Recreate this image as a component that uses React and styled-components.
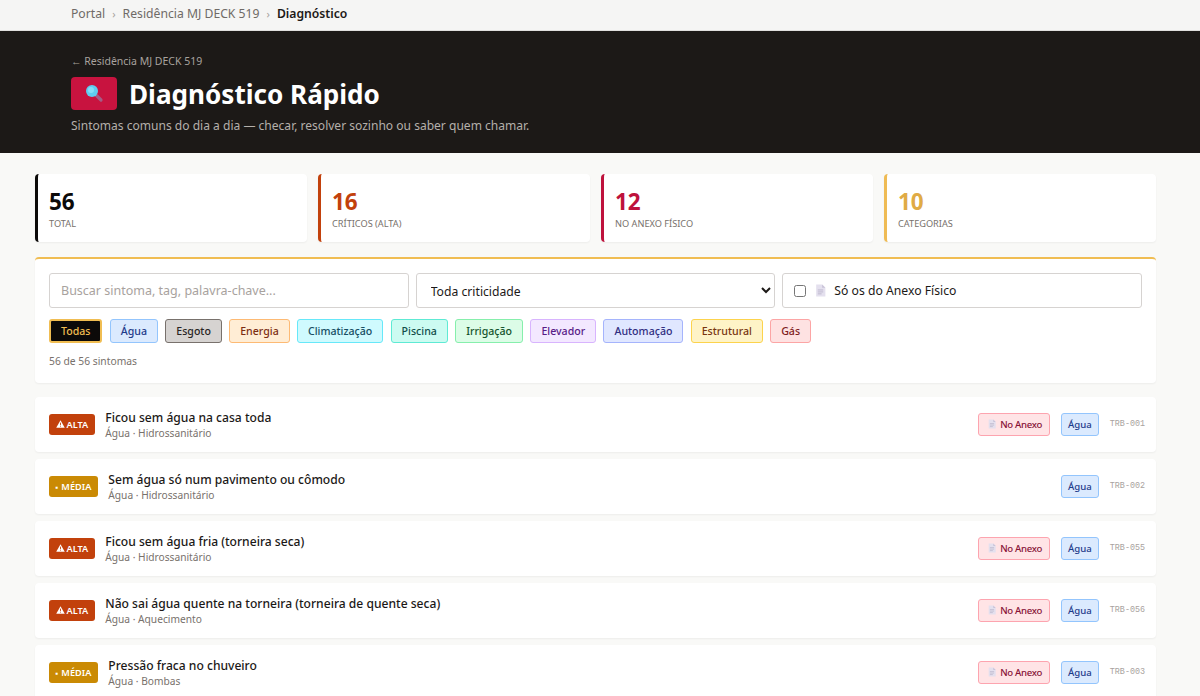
import React from "react";
import styled, { createGlobalStyle } from "styled-components";

const stats = [
  { value: "56", label: "TOTAL", color: "#0c0a09", text: "#0c0a09" },
  { value: "16", label: "CRÍTICOS (ALTA)", color: "#c2410c", text: "#c2410c" },
  { value: "12", label: "NO ANEXO FÍSICO", color: "#be123c", text: "#be123c" },
  { value: "10", label: "CATEGORIAS", color: "#efbb54", text: "#e0ab45" },
];

const pills = [
  { name: "Todas", bg: "#0c0a09", border: "#f0bd52", color: "#f0bd52", width: 2 },
  { name: "Água", bg: "#dbeafe", border: "#93c5fd", color: "#1e3a8a" },
  { name: "Esgoto", bg: "#d6d3d1", border: "#78716c", color: "#292524" },
  { name: "Energia", bg: "#ffedd5", border: "#fdba74", color: "#7c2d12" },
  { name: "Climatização", bg: "#cffafe", border: "#67e8f9", color: "#164e63" },
  { name: "Piscina", bg: "#ccfbf1", border: "#5eead4", color: "#134e4a" },
  { name: "Irrigação", bg: "#dcfce7", border: "#86efac", color: "#14532d" },
  { name: "Elevador", bg: "#f3e8ff", border: "#d8b4fe", color: "#581c87" },
  { name: "Automação", bg: "#e0e7ff", border: "#a5b4fc", color: "#312e81" },
  { name: "Estrutural", bg: "#fef3c7", border: "#fcd34d", color: "#78350f" },
  { name: "Gás", bg: "#fee2e2", border: "#fca5a5", color: "#7f1d1d" },
];

const rows = [
  { level: "alta", title: "Ficou sem água na casa toda", sub: "Água · Hidrossanitário", annex: true, code: "TRB-001" },
  { level: "media", title: "Sem água só num pavimento ou cômodo", sub: "Água · Hidrossanitário", annex: false, code: "TRB-002" },
  { level: "alta", title: "Ficou sem água fria (torneira seca)", sub: "Água · Hidrossanitário", annex: true, code: "TRB-055" },
  { level: "alta", title: "Não sai água quente na torneira (torneira de quente seca)", sub: "Água · Aquecimento", annex: true, code: "TRB-056" },
  { level: "media", title: "Pressão fraca no chuveiro", sub: "Água · Bombas", annex: true, code: "TRB-003" },
];

const DocIcon = ({ size = 12 }) => (
  <svg width={size} height={size} viewBox="0 0 12 12" aria-hidden="true">
    <path d="M2 0.5h5.5L10.5 3.5V11.5H2z" fill="#e4e0ee" />
    <path d="M7.5 0.5L10.5 3.5H7.5z" fill="#c9c3d8" />
    <path d="M3.5 5.5h5M3.5 7.3h5M3.5 9.1h3.5" stroke="#b9b3ca" strokeWidth="0.8" />
  </svg>
);

const WarnIcon = () => (
  <svg width="9" height="8" viewBox="0 0 10 9" aria-hidden="true">
    <path d="M5 0.4L9.8 8.6H0.2z" fill="#fff" />
    <path d="M5 3v2.6M5 6.4v1" stroke="#c2410c" strokeWidth="1" />
  </svg>
);

const LensIcon = () => (
  <svg width="20" height="20" viewBox="0 0 20 20" aria-hidden="true">
    <path d="M11.5 11.5L17 17" stroke="#a45d86" strokeWidth="3.2" strokeLinecap="round" />
    <circle cx="8" cy="8" r="6" fill="#5fcdf0" />
    <circle cx="7" cy="7" r="3" fill="#84def7" />
  </svg>
);

export default function App() {
  return (
    <Page>
      <GlobalStyle />
      <Breadcrumb>
        <span>Portal</span>
        <Sep>›</Sep>
        <span>Residência MJ DECK 519</span>
        <Sep>›</Sep>
        <Current>Diagnóstico</Current>
      </Breadcrumb>
      <Hero>
        <BackLink>← Residência MJ DECK 519</BackLink>
        <TitleRow>
          <IconBox><LensIcon /></IconBox>
          <Title>Diagnóstico Rápido</Title>
        </TitleRow>
        <Subtitle>Sintomas comuns do dia a dia — checar, resolver sozinho ou saber quem chamar.</Subtitle>
      </Hero>
      <Main>
        <StatGrid>
          {stats.map((s) => (
            <StatCard key={s.label} $color={s.color}>
              <StatValue $color={s.text}>{s.value}</StatValue>
              <StatLabel>{s.label}</StatLabel>
            </StatCard>
          ))}
        </StatGrid>
        <FilterPanel>
          <FilterGrid>
            <SearchInput placeholder="Buscar sintoma, tag, palavra-chave..." />
            <Select defaultValue="all">
              <option value="all">Toda criticidade</option>
            </Select>
            <CheckLabel>
              <Check type="checkbox" />
              <DocIcon size={13} />
              <span>Só os do Anexo Físico</span>
            </CheckLabel>
          </FilterGrid>
          <PillRow>
            {pills.map((p) => (
              <Pill key={p.name} $bg={p.bg} $border={p.border} $color={p.color} $width={p.width}>
                {p.name}
              </Pill>
            ))}
          </PillRow>
          <Count>56 de 56 sintomas</Count>
        </FilterPanel>
        <List>
          {rows.map((r) => (
            <Row key={r.code}>
              <Level $level={r.level}>
                {r.level === "alta" ? <WarnIcon /> : <Dot>▪</Dot>}
                {r.level === "alta" ? "ALTA" : "MÉDIA"}
              </Level>
              <RowText>
                <RowTitle>{r.title}</RowTitle>
                <RowSub>{r.sub}</RowSub>
              </RowText>
              <RowTags>
                {r.annex && (
                  <AnnexTag>
                    <DocIcon size={10} />
                    No Anexo
                  </AnnexTag>
                )}
                <WaterTag>Água</WaterTag>
                <Code>{r.code}</Code>
              </RowTags>
            </Row>
          ))}
        </List>
      </Main>
    </Page>
  );
}

const GlobalStyle = createGlobalStyle`
  html, body {
    margin: 0;
    height: 696px;
    overflow: hidden;
    background: #f9f9f7;
  }
  * { box-sizing: border-box; }
`;

const Page = styled.div`
  font-family: "Noto Sans", "Open Sans", sans-serif;
  color: #1c1917;
`;

const Breadcrumb = styled.nav`
  height: 31px;
  padding: 0 71px 4px;
  display: flex;
  align-items: center;
  gap: 7px;
  background: #f5f5f4;
  border-bottom: 1px solid #e0dfdd;
  font-size: 12.2px;
  color: #6f6a66;
`;

const Sep = styled.span`
  color: #a8a29e;
  font-size: 11px;
`;

const Current = styled.span`
  color: #1c1917;
  font-weight: 600;
`;

const Hero = styled.header`
  height: 122px;
  padding: 22px 71px 0;
  background: #1c1917;
  color: #fff;
`;

const BackLink = styled.div`
  font-size: 10.5px;
  line-height: 16px;
  color: #a8a29e;
`;

const TitleRow = styled.div`
  display: flex;
  align-items: center;
  gap: 12px;
  margin-top: 7px;
`;

const IconBox = styled.div`
  width: 46px;
  height: 33px;
  margin-bottom: 2px;
  display: flex;
  align-items: center;
  justify-content: center;
  background: #c8133f;
  border-radius: 4px;
`;

const Title = styled.h1`
  margin: 0;
  font-size: 26.1px;
  line-height: 36px;
  font-weight: 700;
`;

const Subtitle = styled.p`
  margin: 5px 0 0;
  font-size: 12.06px;
  line-height: 18px;
  color: #b5b0ab;
`;

const Main = styled.main`
  padding: 21px 44px 0 35px;
`;

const StatGrid = styled.section`
  display: grid;
  grid-template-columns: repeat(4, 1fr);
  gap: 11px;
`;

const StatCard = styled.div`
  height: 68px;
  padding: 14px 11px;
  background: #fff;
  border-left: 3px solid ${(p) => p.$color};
  border-radius: 4px;
  box-shadow: 0 1px 2px rgba(0, 0, 0, 0.05);
`;

const StatValue = styled.div`
  font-size: 22.5px;
  line-height: 28px;
  font-weight: 700;
  color: ${(p) => p.$color};
`;

const StatLabel = styled.div`
  margin-top: 1px;
  font-size: 9.2px;
  line-height: 14px;
  color: #78716c;
`;

const FilterPanel = styled.section`
  height: 126px;
  margin-top: 15px;
  padding: 14px 14px 0;
  background: #fff;
  border-top: 2px solid #f0bd52;
  border-radius: 4px;
  box-shadow: 0 1px 2px rgba(0, 0, 0, 0.05);
`;

const FilterGrid = styled.div`
  display: grid;
  grid-template-columns: repeat(3, 1fr);
  gap: 7px;
`;

const fieldBase = `
  height: 35px;
  background: #fff;
  border: 1px solid #d6d3d1;
  border-radius: 3px;
  font-family: "Noto Sans", "Open Sans", sans-serif;
  font-size: 12.2px;
  color: #1c1917;
`;

const SearchInput = styled.input`
  ${fieldBase}
  width: 100%;
  padding: 0 11px;
  font-size: 12.5px;
  &::placeholder {
    color: #a8a29e;
    opacity: 1;
  }
`;

const Select = styled.select`
  ${fieldBase}
  width: 100%;
  padding: 2px 10px 0;
`;

const CheckLabel = styled.label`
  ${fieldBase}
  display: flex;
  align-items: center;
  gap: 7px;
  padding: 0 11px;
`;

const Check = styled.input`
  width: 12px;
  height: 12px;
  margin: 0 1px 0 0;
`;

const PillRow = styled.div`
  display: flex;
  gap: 7.3px;
  margin-top: 11px;
`;

const Pill = styled.button`
  height: 24px;
  padding: 0 10px;
  background: ${(p) => p.$bg};
  border: ${(p) => p.$width || 1}px solid ${(p) => p.$border};
  border-radius: 3px;
  color: ${(p) => p.$color};
  font-family: "Noto Sans", "Open Sans", sans-serif;
  font-size: 10.6px;
  font-weight: 500;
`;

const Count = styled.div`
  margin-top: 11px;
  font-size: 10.3px;
  line-height: 14px;
  color: #78716c;
`;

const List = styled.section`
  display: flex;
  flex-direction: column;
  gap: 7px;
  margin-top: 14px;
`;

const Row = styled.article`
  height: 55px;
  display: flex;
  align-items: center;
  gap: 10.5px;
  padding: 1px 11px 0 14px;
  background: #fff;
  border-radius: 4px;
  box-shadow: 0 1px 2px rgba(0, 0, 0, 0.05);
`;

const Level = styled.span`
  height: 21px;
  margin-bottom: 2px;
  display: inline-flex;
  align-items: center;
  gap: 2px;
  padding: 0 6.5px;
  border-radius: 3px;
  background: ${(p) => (p.$level === "alta" ? "#c2410c" : "#ca8a04")};
  color: #fff;
  font-size: 9.2px;
  font-weight: 600;
`;

const Dot = styled.span`
  font-size: 8px;
  margin-right: 1px;
`;

const RowText = styled.div`
  flex: 1;
  min-width: 0;
`;

const RowTitle = styled.div`
  font-size: 12.1px;
  line-height: 17px;
  font-weight: 500;
  color: #1c1917;
`;

const RowSub = styled.div`
  font-size: 10.2px;
  line-height: 15px;
  color: #78716c;
`;

const RowTags = styled.div`
  margin-bottom: 2px;
  display: flex;
  align-items: center;
  gap: 11px;
`;

const Tag = styled.span`
  height: 23px;
  display: inline-flex;
  align-items: center;
  border-radius: 3px;
  font-size: 9.6px;
  font-weight: 500;
`;

const AnnexTag = styled(Tag)`
  gap: 3px;
  padding: 0 7px 0 8px;
  background: #ffe4e6;
  border: 1px solid #fda4af;
  color: #881337;
  letter-spacing: -0.3px;
`;

const WaterTag = styled(Tag)`
  padding: 0 6px;
  background: #dbeafe;
  border: 1px solid #93c5fd;
  color: #1e3a8a;
`;

const Code = styled.span`
  font-family: "Liberation Mono", monospace;
  font-size: 8.4px;
  color: #a8a29e;
`;
